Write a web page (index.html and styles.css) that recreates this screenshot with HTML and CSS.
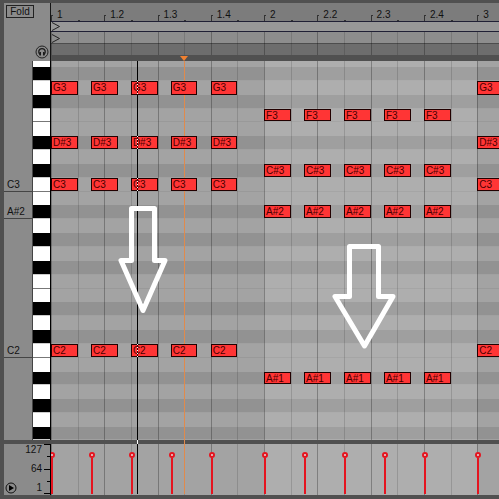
FILE: index.html
```
<!DOCTYPE html>
<html lang="en">
<head>
<meta charset="utf-8">
<title>MIDI editor</title>
<link rel="stylesheet" href="styles.css">
</head>
<body>
<main class="editor">
  <div class="side">
    <button class="fold" type="button">Fold</button>
    <button class="listen" type="button" aria-label="Preview notes">
      <svg viewBox="0 0 14 14" width="14" height="14" aria-hidden="true">
        <circle cx="7" cy="7" r="6" fill="#8b8b8b" stroke="#222" stroke-width="1"/>
        <path d="M5 9.5C3 8 3.2 3.6 7 3.6S11 8 9 9.5" fill="none" stroke="#1a1a1a" stroke-width="1.3"/>
        <path d="M5.2 7v3.600M8.800 7v3.600" stroke="#1a1a1a" stroke-width="1.6"/>
      </svg>
    </button>
  </div>
  <header class="top">
    <div class="ruler" id="ruler"></div>
    <div class="strip loop"><svg class="flag" viewBox="0 0 10 9" aria-hidden="true"><path d="M1 .5L8.500 4.500L1 8.500"/></svg></div>
    <div class="strip marker"><svg class="flag" viewBox="0 0 10 9" aria-hidden="true"><path d="M1 .5L8.500 4.500L1 8.500"/></svg></div>
    <div class="scrub"></div>
    <div class="cue"></div>
    <div class="lines" id="topLines"></div>
  </header>
  <div class="names" id="names"></div>
  <div class="keys" id="keys"></div>
  <section class="roll" id="roll" aria-label="Notes"></section>
  <div class="divider"></div>
  <div class="scale">
    <div class="values"><span>127</span><span>64</span><span>1</span></div>
    <div class="ticks"><i></i><i></i><i></i><i></i><i></i></div>
    <button class="play" type="button" aria-label="Play">
      <svg viewBox="0 0 12 12" width="12" height="12" aria-hidden="true">
        <circle cx="6" cy="6" r="5" fill="#8b8b8b" stroke="#111"/>
        <path d="M4 3L9 6L4 9Z" fill="#000"/>
      </svg>
    </button>
  </div>
  <section class="velocity" id="velocity" aria-label="Velocity"></section>
  <div class="overlay">
    <div class="insert"></div>
    <div class="playhead"></div>
    <svg class="arrow first" viewBox="0 0 50 110" aria-hidden="true"><path d="M13.500 3.500H36.500V55.500H47L25 105.500L3 55.500H13.500Z"/></svg>
    <svg class="arrow second" viewBox="0 0 64 108" aria-hidden="true"><path d="M17.500 3.500H46.500V53.500H61L32.500 103L3 53.500H17.500Z"/></svg>
  </div>
</main>
<script src="roll.js"></script>
</body>
</html>
```
FILE: styles.css
```
:root { --beats: 8.41; }
*, *::before, *::after { box-sizing: border-box; }
html, body { height: 100%; }
body {
  margin: 0;
  background: #505050;
  font-family: "Liberation Sans", Arial, sans-serif;
  font-size: 10px;
  line-height: 12px;
  color: #111;
}
button { padding: 0; font: inherit; color: inherit; background: none; border: 0; }
svg { display: block; }

.editor {
  position: relative;
  display: grid;
  grid-template-columns: 28px 19px minmax(0, 1fr);
  grid-template-rows: 58px minmax(0, 1fr) 4px 51px;
  height: 100vh;
  padding: 3px 0 4px 4px;
  overflow: hidden;
}
.side {
  grid-column: 1 / 3;
  display: flex;
  justify-content: space-between;
  align-items: flex-end;
  padding: 0 2px 2px;
  background: #8b8b8b;
}
.fold {
  align-self: flex-start;
  width: 28px;
  height: 13px;
  margin-top: 2px;
  line-height: 11px;
  border: 1px solid #222;
}

.top {
  position: relative;
  display: flex;
  flex-direction: column;
  border-left: 1px solid #151515;
  margin-left: -1px;
  overflow: hidden;
}
.ruler { position: relative; height: 18px; background: #7c7c7c; }
.beat {
  position: absolute;
  left: calc(var(--t) * 100% / var(--beats));
  top: 12px;
  height: 6px;
  width: 2px;
  border: solid #333;
  border-width: 1px 0 0 1px;
}
.beat.half { top: 17px; height: 1px; }
.beat span { position: absolute; left: 5px; top: -7px; white-space: nowrap; }
.strip { border-top: 1px solid #202035; }
.loop { height: 10px; background: #989898; }
.marker { height: 12px; padding-top: 2px; background: #8d8d8d; }
.flag { width: 10px; height: 9px; fill: none; stroke: #222; }
.scrub { height: 12px; background: #6d6d6d; border-top: 1px solid #4d4d4d; }
.cue { height: 6px; background: #505050; }
.lines { position: absolute; inset: 29px 0 6px; }
.line {
  position: absolute;
  left: calc(var(--t) * 100% / var(--beats));
  top: 0;
  bottom: 0;
  width: 1px;
  background: #0002;
}
.line.main { background: #0004; }

.names, .keys, .roll {
  display: grid;
  grid-template-rows: 6px repeat(26, minmax(0, 1fr)) 13px;
}
.names { background: #8b8b8b; }
.name { padding-left: 3px; border-bottom: 1px solid #444; line-height: 14px; }
.keys { background: #fff; border-left: 1px solid #444; border-right: 1px solid #000; }
.key.black { background: #000; border-bottom: 1px solid #ccc; }
.key.seam { border-bottom: 1px solid #777; }
.roll, .velocity { position: relative; overflow: hidden; background: #a3a3a3; }
.row { position: relative; }
.row.black { background: #929292; border-bottom: 1px solid #a0a0a0; }
.row.seam { border-bottom: 1px solid #999; }
.bar {
  position: absolute;
  top: 0;
  bottom: 0;
  left: calc(400% / var(--beats));
  width: calc(400% / var(--beats));
  background: #ffffff20;
}
.note {
  position: absolute;
  z-index: 3;
  left: calc(var(--t) * 100% / var(--beats));
  top: 0;
  bottom: 0;
  width: calc(50% / var(--beats));
  padding-left: 1px;
  border: 1px solid #200;
  background: #ff3535;
  color: #4a0000;
  line-height: 12px;
}
.note.crossed::after {
  content: "";
  position: absolute;
  left: 5px;
  top: -1px;
  bottom: -1px;
  width: 1px;
  background: repeating-linear-gradient(#fff 0 1px, #400 1px 3px);
}
.divider { grid-column: 1 / -1; background: #505050; margin-left: 1px; }
.scale {
  grid-column: 1 / 3;
  position: relative;
  display: grid;
  grid-template-columns: 1fr 8px;
  background: #8b8b8b;
}
.values {
  display: flex;
  flex-direction: column;
  justify-content: space-between;
  text-align: right;
  padding: 0 1px 1px 0;
}
.ticks {
  display: flex;
  flex-direction: column;
  align-items: flex-end;
  justify-content: space-between;
  border-right: 1px solid #000;
  padding-bottom: 1px;
}
.ticks i { width: 6px; height: 1px; background: #000; }
.ticks i:nth-child(even) { width: 3px; }
.play { position: absolute; left: 1px; bottom: 1px; }
.stem {
  position: absolute;
  left: calc(var(--t) * 100% / var(--beats));
  top: 14px;
  bottom: 1px;
  width: 2px;
  background: #e5141f;
}
.stem::before {
  content: "";
  position: absolute;
  left: -2px;
  top: -6px;
  width: 6px;
  height: 6px;
  border: 2px solid #e5141f;
  border-radius: 50%;
  background: #ddd;
}

.overlay { position: absolute; inset: 0 0 0 51px; pointer-events: none; z-index: 2; }
.playhead { position: absolute; left: 19.2%; top: 61px; bottom: 5px; width: 1px; background: #000; }
.playhead::after {
  content: "";
  position: absolute;
  left: 0;
  bottom: 50px;
  width: 1px;
  height: 4px;
  background: #fff;
}
.insert {
  position: absolute;
  left: calc(250% / var(--beats));
  top: 61px;
  bottom: 5px;
  width: 1px;
  background: #e08a4c;
}
.insert::before {
  content: "";
  position: absolute;
  left: -4px;
  top: -5px;
  border: solid transparent;
  border-width: 5px 4px 0;
  border-top-color: #f08030;
}
.arrow { position: absolute; fill: none; stroke: #fff; stroke-width: 5; stroke-linejoin: round; }
.first { left: 67px; top: 205px; width: 50px; height: 110px; }
.second { left: 281px; top: 243px; width: 64px; height: 108px; }
```
FILE: roll.js
```
const pitches = ["C", "C#", "D", "D#", "E", "F", "F#", "G", "G#", "A", "A#", "B"];
const steps = [0, 0.75, 1.5, 2.25, 3];
const playhead = 1.61;
const chords = [
  { start: 0, notes: ["G3", "D#3", "C3", "C2"], steps },
  { start: 4, notes: ["F3", "C#3", "A#2", "A#1"], steps },
  { start: 8, notes: ["G3", "D#3", "C3", "C2"], steps: [0] }
];

function add(parent, className, time, text) {
  const el = document.createElement("div");
  el.className = className;
  if (time !== undefined) el.style.setProperty("--t", time);
  if (text) el.textContent = text;
  parent.append(el);
  return el;
}

const roll = document.getElementById("roll");
const keys = document.getElementById("keys");
const names = document.getElementById("names");
const ruler = document.getElementById("ruler");
const velocity = document.getElementById("velocity");
const topLines = document.getElementById("topLines");

for (let n = 45; n >= 18; n--) {
  const pitch = pitches[n % 12];
  const name = pitch + Math.floor(n / 12);
  const kind = pitch.includes("#") ? " black" : pitch === "C" || pitch === "F" ? " seam" : "";
  const row = add(roll, "row" + kind);
  add(keys, "key" + kind);
  add(names, ["C3", "A#2", "C2"].includes(name) ? "name" : "", undefined,
    ["C3", "A#2", "C2"].includes(name) ? name : "");
  for (const chord of chords) {
    if (!chord.notes.includes(name)) continue;
    for (const step of chord.steps) {
      const t = chord.start + step;
      const crossed = t < playhead && playhead < t + 0.5;
      add(row, crossed ? "note crossed" : "note", t, name);
    }
  }
}

add(roll, "bar");
add(velocity, "bar");
for (let t = 0; t <= 8; t += 0.5) {
  const whole = t % 1 === 0;
  for (const area of [roll, velocity, topLines]) add(area, whole ? "line main" : "line", t);
  const tick = add(ruler, whole ? "beat" : "beat half", t);
  if (whole) {
    const label = document.createElement("span");
    label.textContent = Math.floor(t / 4) + 1 + (t % 4 ? "." + (t % 4 + 1) : "");
    tick.append(label);
  }
}
for (const chord of chords) {
  for (const step of chord.steps) add(velocity, "stem", chord.start + step);
}
```
